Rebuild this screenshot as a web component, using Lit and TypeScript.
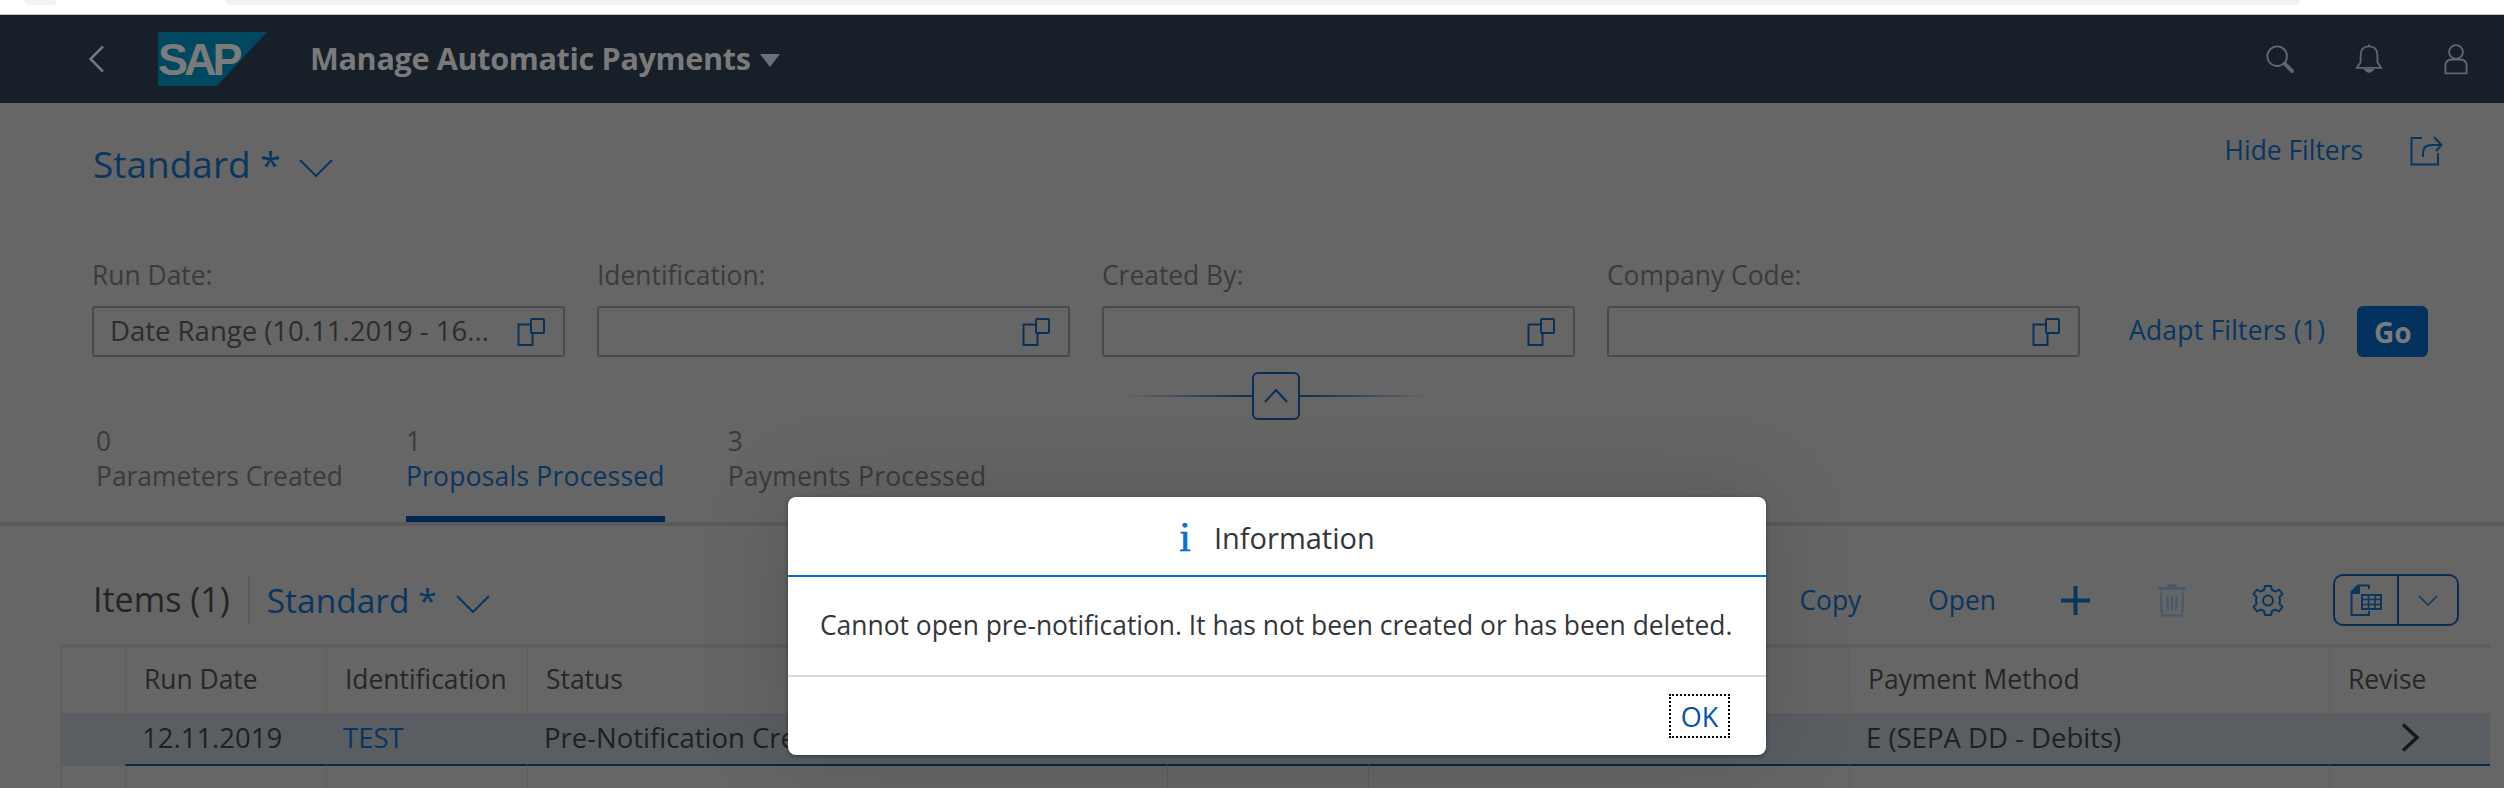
import { LitElement, html, css } from "lit";
import { customElement } from "lit/decorators.js";

const valueHelp = html`<svg class="vh" width="28" height="28" viewBox="0 0 28 28" fill="none" stroke="currentColor" stroke-width="2"><path d="M13 6.500H1.500V27H15.500V15.500"/><rect x="14" y="1" width="13" height="14" rx="1"/></svg>`;
const chevron = (w: number, h: number) => html`<svg width=${w} height=${h} viewBox="0 0 34 18" fill="none" stroke="currentColor" stroke-width="2"><path d="M1 1L17 17L33 1"/></svg>`;

const columns = ["", "Run Date", "Identification", "Status", "", "", "Payment Method", "Revise"];

@customElement("app-root")
export class AppRoot extends LitElement {
  static styles = css`
    :host { display: block; font-family: "Open Sans", "Noto Sans", sans-serif; }
    * { box-sizing: border-box; }
    .page { position: relative; height: 788px; overflow: hidden; background: #666; color: #3b3b3b; font-size: 26.4px; }
    .strip { height: 15px; background: #fff; border-bottom: 1px solid #c4c4c4; display: flex; align-items: flex-start; padding-left: 24px; }
    .dot { width: 33px; height: 5px; background: #f2f3f5; border-radius: 0 0 16px 16px; }
    .pill { width: 2075px; height: 5px; margin-left: 168px; background: #f0f2f5; border-radius: 0 0 12px 12px; }
    .shell { height: 88px; background: #171f29; display: flex; align-items: center; padding-left: 88px; color: #757575; }
    .back { margin-right: 53px; color: #6f7780; }
    .logo { width: 109px; height: 54px; margin-right: 43px; background: #00485f; clip-path: polygon(0 0, 100% 0, 54% 100%, 0 100%); display: flex; align-items: center; }
    .logo span { font: 700 45px/1 "Liberation Sans", sans-serif; letter-spacing: -4px; color: #7b7b7b; margin-top: 1px; }
    .title { font-size: 30.600px; font-weight: 700; letter-spacing: -0.350px; color: #7a7a7a; white-space: nowrap; margin-top: -2px; }
    .tri { width: 0; height: 0; margin-left: 9px; margin-top: 3px; border: 10px solid transparent; border-top: 13px solid #68717c; border-bottom: 0; }
    .spacer { flex: 1; }
    .shell-icons { display: flex; align-items: center; gap: 61px; padding-right: 36px; color: #5f6871; }
    .vbar { height: 124px; padding: 0 61px 0 93px; display: flex; align-items: center; color: #0a355f; }
    .variant { font-size: 37px; line-height: 50px; margin-top: -3px; white-space: nowrap; }
    .vbar .chev { margin-left: 18px; margin-top: 4px; }
    .vactions { margin-left: auto; margin-bottom: 30px; display: flex; align-items: center; gap: 47px; }
    .filters { padding: 33px 0 0 92px; display: flex; align-items: flex-end; gap: 32px; }
    .field { width: 473px; }
    .label { height: 30px; line-height: 30px; margin-bottom: 16px; white-space: nowrap; }
    .input { height: 51px; border: 2px solid #474b50; border-radius: 3px; display: flex; align-items: center; justify-content: space-between; padding: 0 18px 0 16px; color: #2b2d30; white-space: nowrap; font-size: 27.500px; }
    .input span { margin-top: -2px; }
    .input .vh { margin-left: auto; color: #0a3058; }
    .adapt { margin-left: 17px; height: 51px; line-height: 49px; color: #0a355f; white-space: nowrap; letter-spacing: 0.250px; }
    .go { width: 71px; height: 51px; background: #03325f; color: #7b7b7b; font-weight: 700; font-size: 28px; border-radius: 6px; display: flex; align-items: center; justify-content: center; }
    .collapse { margin: 15px 0 0 1125px; width: 302px; display: flex; align-items: center; height: 48px; color: #0a2f57; }
    .collapse i { flex: 1; height: 2px; }
    .collapse i:first-child { background: linear-gradient(to right, transparent, #0a2f57); }
    .collapse i:last-child { background: linear-gradient(to left, transparent, #0a2f57); }
    .cbtn { width: 48px; height: 48px; border: 2px solid #0a2f57; border-radius: 6px; display: flex; align-items: center; justify-content: center; }
    .tabs { height: 106px; padding-left: 96px; display: flex; gap: 63px; border-bottom: 4px solid #5b5b5b; }
    .tab { height: 102px; padding-top: 6px; border-bottom: 6px solid transparent; white-space: nowrap; }
    .tab div { height: 30px; line-height: 30px; }
    .tab .name { margin-top: 5px; }
    .tab:not(:first-child) .name { letter-spacing: 0.250px; }
    .tab.on { border-bottom-color: #02264f; }
    .tab.on .name { color: #0a355f; }
    .tools { height: 118px; padding: 30px 45px 0 93px; display: flex; align-items: center; color: #0a355f; }
    .items { font-size: 34px; color: #242424; white-space: nowrap; padding-right: 18px; height: 48px; line-height: 46px; border-right: 2px solid #5a5a5a; }
    .tools .variant { margin-left: 17px; font-size: 33.500px; margin-top: 0; }
    .tools .chev { margin-left: 19px; margin-top: 6px; }
    .actions { margin-left: auto; display: flex; align-items: center; color: #0a355f; white-space: nowrap; }
    .actions .open { margin-left: 67px; }
    .actions .plus { margin-left: 65px; }
    .actions .trash { margin-left: 68px; color: #45596e; }
    .actions .gear { margin-left: 66px; }
    .split { margin-left: 49px; width: 126px; height: 52px; border: 2px solid #0a2f57; border-radius: 10px; display: grid; grid-template-columns: 62px 1fr; }
    .split > div { display: flex; align-items: center; justify-content: center; }
    .split > div + div { border-left: 2px solid #0a2f57; }
    .table { margin-left: 60px; width: 2430px; border-top: 4px solid #5e5e5e; border-left: 2px solid #5e5e5e; display: grid; grid-template-columns: 63px 201px 201px 640px 201px 481px 480px 161px; grid-template-rows: 66px 52px 40px; }
    .c { padding-left: 18px; display: flex; align-items: center; white-space: nowrap; border-left: 1px solid #5d5d5d; color: #272727; overflow: hidden; }
    .c:nth-child(8n+1) { border-left: 0; }
    .h { border-bottom: 1px solid #606060; padding-bottom: 3px; }
    .s { background: #5a5e63; padding-left: 16px; padding-bottom: 3px; border-bottom: 2px solid #04284f; color: #1e2022; font-size: 27.500px; }
    .s.first { border-bottom-color: #5d5d5d; }
    .s.link { color: #0a355f; }
    .s.next { justify-content: center; padding-left: 0; color: #17191c; }
    .dialog { position: absolute; left: 788px; top: 497px; width: 978px; height: 258px; background: #fff; border-radius: 8px; box-shadow: 0 0 90px rgba(0,0,0,.16), 0 1px 4px rgba(0,0,0,.4); display: flex; flex-direction: column; color: #32363a; }
    .d-head { height: 80px; padding-top: 2px; border-bottom: 2px solid #0a6ed1; display: flex; align-items: center; justify-content: center; gap: 23px; font-size: 29px; }
    .d-head b { color: #0a6ed1; font: 400 42px/1 "Liberation Serif", serif; -webkit-text-stroke: 0.6px #0a6ed1; }
    .d-body { height: 100px; padding: 0 0 2px 32px; border-bottom: 2px solid #d9d9d9; display: flex; align-items: center; white-space: nowrap; }
    .d-foot { flex: 1; display: flex; align-items: center; justify-content: flex-end; padding-right: 36px; }
    .ok { width: 61px; height: 44px; border: 2px dotted #000; display: flex; align-items: center; justify-content: center; color: #0854a0; font-size: 27px; }
  `;

  render() {
    return html`<div class="page">
      <div class="strip"><div class="dot"></div><div class="pill"></div></div>
      <header class="shell">
        <svg class="back" width="17" height="28" viewBox="0 0 17 28" fill="none" stroke="currentColor" stroke-width="2.500"><path d="M15 1.500L2.500 14L15 26.500"/></svg>
        <div class="logo"><span>SAP</span></div>
        <div class="title">Manage Automatic Payments</div><div class="tri"></div>
        <div class="spacer"></div>
        <div class="shell-icons">
          <svg width="28" height="28" viewBox="0 0 30 30" fill="none" stroke="currentColor" stroke-width="2"><circle cx="12" cy="12" r="10.500"/><path d="M20 20L28 28" stroke-width="4" stroke-linecap="round"/></svg>
          <svg width="28" height="32" viewBox="0 0 30 33" fill="none" stroke="currentColor" stroke-width="2"><path d="M15 3C8 3 6 8 6 13V20L2 26H28L24 20V13C24 8 22 3 15 3ZM15 1V3"/><path d="M11 28Q15 33 19 28Z" fill="currentColor"/></svg>
          <svg width="24" height="32" viewBox="0 0 26 33" fill="none" stroke="currentColor" stroke-width="2"><circle cx="13" cy="9" r="7.500"/><path d="M1.500 32V24Q1.500 17 9 17H17Q24.500 17 24.500 24V32Z"/></svg>
        </div>
      </header>

      <section class="vbar">
        <span class="variant">Standard *</span>
        <span class="chev">${chevron(34, 18)}</span>
        <div class="vactions">
          <span>Hide Filters</span>
          <svg width="33" height="31" viewBox="0 0 33 31" fill="none" stroke="currentColor" stroke-width="2"><path d="M12 3H1.500V29.500H28V18"/><path d="M13 22V18Q13 10 22 10H31M24 2L31.500 10L26 16"/></svg>
        </div>
      </section>

      <section class="filters">
        <div class="field"><div class="label">Run Date:</div><div class="input"><span>Date Range (10.11.2019 - 16...</span>${valueHelp}</div></div>
        <div class="field"><div class="label">Identification:</div><div class="input">${valueHelp}</div></div>
        <div class="field"><div class="label">Created By:</div><div class="input">${valueHelp}</div></div>
        <div class="field"><div class="label">Company Code:</div><div class="input">${valueHelp}</div></div>
        <div class="adapt">Adapt Filters (1)</div>
        <div class="go">Go</div>
      </section>

      <div class="collapse"><i></i><div class="cbtn"><svg width="24" height="14" viewBox="0 0 24 14" fill="none" stroke="currentColor" stroke-width="2"><path d="M1 13L12 1L23 13"/></svg></div><i></i></div>

      <nav class="tabs">
        <div class="tab"><div>0</div><div class="name">Parameters Created</div></div>
        <div class="tab on"><div>1</div><div class="name">Proposals Processed</div></div>
        <div class="tab"><div>3</div><div class="name">Payments Processed</div></div>
      </nav>

      <section class="tools">
        <span class="items">Items (1)</span>
        <span class="variant">Standard *</span>
        <span class="chev">${chevron(34, 18)}</span>
        <div class="actions">
          <span>Copy</span>
          <span class="open">Open</span>
          <svg class="plus" width="29" height="29" viewBox="0 0 29 29" fill="none" stroke="currentColor" stroke-width="4"><path d="M14.500 0V29M0 14.500H29"/></svg>
          <svg class="trash" width="28" height="33" viewBox="0 0 28 33" fill="none" stroke="currentColor" stroke-width="2"><path d="M0 4.500H28" stroke-width="2.500"/><path d="M10 3.500Q10 1 13 1H15Q18 1 18 3.500" fill="currentColor"/><path d="M2.500 7L4 31.500H24L25.500 7"/><path d="M9.500 11.500L10 26M14 11.500V26M18.500 11.500L18 26" stroke-width="2"/></svg>
          <svg class="gear" width="32" height="33" viewBox="0 0 32 33" fill="none" stroke="currentColor" stroke-width="2"><circle cx="16" cy="16.500" r="5"/><path d="M13 2H19L20 6L23.500 7.500L27 5.500L30.500 10L27.500 13L28 16.500L27.500 20L30.500 23L27 27.500L23.500 25.500L20 27L19 31H13L12 27L8.500 25.500L5 27.500L1.500 23L4.500 20L4 16.500L4.500 13L1.500 10L5 5.500L8.500 7.500L12 6Z" stroke-linejoin="round"/></svg>
          <div class="split">
            <div><svg width="32" height="32" viewBox="0 0 32 32" fill="none" stroke="currentColor" stroke-width="2"><path d="M19 5V1.500H8L1.500 8V31H19V27"/><path d="M1.500 9H9V1.500" fill="currentColor"/><rect x="12" y="11" width="19" height="14"/><path d="M18.500 11V25M25 11V25M12 15.500H31M12 20.500H31" stroke-width="1.500"/></svg></div>
            <div><svg width="20" height="11" viewBox="0 0 20 11" fill="none" stroke="currentColor" stroke-width="1.500"><path d="M1 1L10 10L19 1"/></svg></div>
          </div>
        </div>
      </section>

      <section class="table">
        ${columns.map((c) => html`<div class="c h">${c}</div>`)}
        <div class="c s first"></div>
        <div class="c s">12.11.2019</div>
        <div class="c s link">TEST</div>
        <div class="c s">Pre-Notification Created</div>
        <div class="c s"></div>
        <div class="c s"></div>
        <div class="c s">E (SEPA DD - Debits)</div>
        <div class="c s next"><svg width="19" height="29" viewBox="0 0 19 29" fill="none" stroke="currentColor" stroke-width="3.500"><path d="M2 1.500L16 14.500L2 27.500"/></svg></div>
        ${columns.map(() => html`<div class="c"></div>`)}
      </section>

      <div class="dialog" role="dialog">
        <div class="d-head"><b>i</b><span>Information</span></div>
        <div class="d-body">Cannot open pre-notification. It has not been created or has been deleted.</div>
        <div class="d-foot"><div class="ok">OK</div></div>
      </div>
    </div>`;
  }
}
